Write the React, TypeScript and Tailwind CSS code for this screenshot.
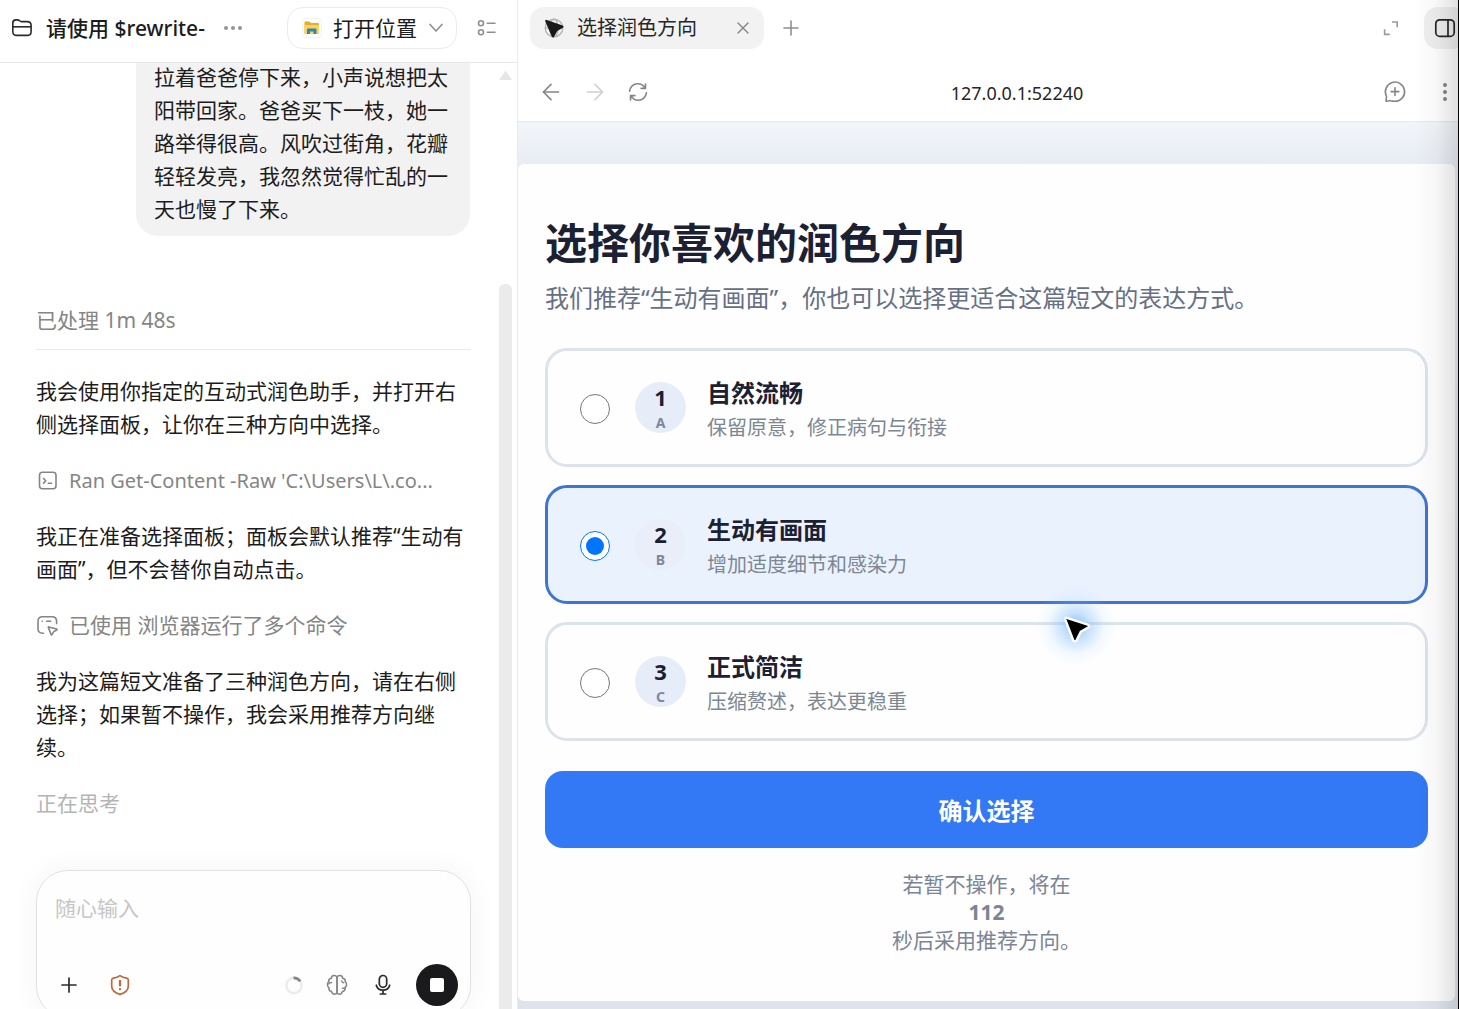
import { useState } from "react";
import { ArrowLeft, ArrowRight, Plus, X } from "lucide-react";

interface Direction {
  id: string;
  letter: string;
  title: string;
  desc: string;
}

const DIRECTIONS: Direction[] = [
  { id: "1", letter: "A", title: "自然流畅", desc: "保留原意，修正病句与衔接" },
  { id: "2", letter: "B", title: "生动有画面", desc: "增加适度细节和感染力" },
  { id: "3", letter: "C", title: "正式简洁", desc: "压缩赘述，表达更稳重" },
];

function FolderIcon() {
  return (
    <svg width="22" height="22" viewBox="0 0 22 22" fill="none" stroke="#2b2b2b" strokeWidth="1.6" strokeLinejoin="round">
      <path d="M1.8 6.2c0-2 1.1-3.3 3-3.3h1.7c.9 0 1.5.3 2.1.9.6.6 1 .8 1.9.8h5.7c2.4 0 3.9 1.4 3.9 3.7v6.1c0 2.5-1.4 4-4 4H5.7c-2.5 0-3.9-1.5-3.9-4Z" />
      <path d="M1.8 9.8h18.3" />
    </svg>
  );
}

function ExplorerIcon() {
  return (
    <svg width="20" height="20" viewBox="0 0 20 20">
      <rect x=".5" y=".5" width="19" height="19" rx="3" fill="#fff" stroke="#f1f1f1" />
      <path d="M2.5 4.5c0-.6.4-1 1-1h4l1.5 1.5h7c.6 0 1 .4 1 1v9.5h-14.500Z" fill="#e8ae1f" />
      <path d="M2.5 7h14.5v8.5H2.5Z" fill="#fad365" />
      <path d="M5 16v-4.500c0-.6.4-1 1-1h7.500c.6 0 1 .4 1 1V16h-3v-2.500h-3.500V16Z" fill="#2f88a8" />
    </svg>
  );
}

function ChecklistIcon() {
  return (
    <svg width="20" height="18" viewBox="0 0 20 18" fill="none" stroke="#8f8f8f" strokeWidth="1.6" strokeLinecap="round">
      <circle cx="4" cy="4.2" r="2.5" />
      <circle cx="4" cy="13.2" r="2.5" />
      <path d="M10.3 4.2h7.7M10.3 13.2h7.7" />
    </svg>
  );
}

function TerminalIcon() {
  return (
    <svg width="22" height="22" viewBox="0 0 22 22" fill="none" stroke="#858585" strokeWidth="1.6" strokeLinecap="round" strokeLinejoin="round">
      <rect x="3.5" y="2.3" width="16.5" height="16.5" rx="3" />
      <path d="M7.5 8.5l2.3 2.3-2.3 2.3M12.3 13.3h3.2" />
    </svg>
  );
}

function BrowserUseIcon() {
  return (
    <svg width="22" height="22" viewBox="0 0 22 22" fill="none" stroke="#858585" strokeWidth="1.6" strokeLinecap="round" strokeLinejoin="round">
      <path d="M7.5 18.2H6.5c-3 0-4.500-1.600-4.500-4.400V6.300c0-3 1.600-4.500 4.500-4.500h9.500c3 0 4.600 1.500 4.600 4.500v2.300" />
      <path d="M6.2 6.300h.1M10.700 6.300h4" />
      <path d="M12.8 11.900l7.800 2.200c.5.200.5.600.1.900l-2.900 1.600-1.800 3c-.3.500-.8.400-.9-.1l-2.800-7.100c-.1-.3.100-.6.500-.5Z" />
    </svg>
  );
}

function ShieldAlertIcon() {
  return (
    <svg width="22" height="22" viewBox="0 0 22 22" fill="none" stroke="#c0683c" strokeWidth="1.7" strokeLinecap="round" strokeLinejoin="round">
      <path d="M11 1.6c2 1.300 4.200 2.100 6.600 2.500 1 .2 1.700.8 1.700 1.900v6.200c0 4.300-2.600 6.300-8.300 8.200-5.700-1.900-8.300-3.900-8.300-8.200V6c0-1.100.7-1.700 1.700-1.900 2.400-.4 4.600-1.200 6.600-2.500Z" />
      <path d="M11 6.8v4.7" strokeWidth="2.2" />
      <path d="M11 15.1v.1" strokeWidth="2.3" />
    </svg>
  );
}

function SpinnerIcon() {
  return (
    <svg width="20" height="20" viewBox="0 0 20 20" fill="none" strokeWidth="2.6">
      <circle cx="10" cy="10.5" r="7.6" stroke="#ececec" />
      <path d="M9.500 2.900a7.600 7.600 0 0 1 6.700 3.500" stroke="#858585" />
    </svg>
  );
}

function BrainIcon() {
  return (
    <svg width="22" height="22" viewBox="0 0 22 22" fill="none" stroke="#858585" strokeWidth="1.5" strokeLinecap="round" strokeLinejoin="round">
      <path d="M11 3.500C10.400 2 9.300 1.500 8 1.600 6.400 1.700 5.400 2.900 5.400 4.300 3.600 4.600 2.500 5.900 2.700 7.700 1.600 8.600 1.200 9.900 1.500 11.400c.2 1.100.7 1.800 1.400 2.300-.2 2 .9 3.500 2.700 3.900.4 1.600 1.400 2.700 3 2.700 1.200 0 2-.6 2.400-1.600Z" />
      <path d="M11 3.500c.6-1.500 1.700-2 3-1.900 1.600.1 2.600 1.300 2.600 2.700 1.800.3 2.900 1.600 2.700 3.400 1.100.9 1.500 2.200 1.200 3.700-.2 1.100-.7 1.800-1.400 2.300.2 2-.9 3.500-2.700 3.900-.4 1.600-1.400 2.700-3 2.700-1.200 0-2-.6-2.400-1.600Z" />
      <path d="M2.900 9.800c.6-1 1.500-1.500 2.600-1.300M15.700 6.900c.3 1.100 1 1.700 2 1.800M19 13.500c-.6.700-1.500 1-2.500.8" />
    </svg>
  );
}

function MicIcon() {
  return (
    <svg width="20" height="22" viewBox="0 0 20 22" fill="none" stroke="#2b2b2b" strokeWidth="1.7" strokeLinecap="round">
      <rect x="6.300" y="1.500" width="7.400" height="11.800" rx="3.700" />
      <path d="M3.300 11.200c.8 3 3.400 5 6.700 5s5.900-2 6.700-5M10 16.200v3.700M7.300 20h5.400" />
    </svg>
  );
}

function GlobePointerIcon() {
  return (
    <svg width="22" height="22" viewBox="0 0 22 22">
      <g fill="none" stroke="#b4b4b4" strokeWidth="1.4">
        <circle cx="11" cy="11" r="8.8" />
        <ellipse cx="11" cy="11" rx="4" ry="8.8" />
        <path d="M2.200 11h17.600" />
      </g>
      <path d="M3.800 2.900l15.800 5.600c1.200.5 1.300 1.700.2 2.300l-5.600 3.300-3 5.500c-.7 1.200-2 1.100-2.400-.2L2.300 4.600c-.4-1.200.4-2 1.500-1.700Z" fill="#191919" />
    </svg>
  );
}

function ReloadIcon() {
  return (
    <svg width="20" height="20" viewBox="0 0 20 20" fill="none" stroke="#858585" strokeWidth="1.6" strokeLinecap="round" strokeLinejoin="round">
      <path d="M1.600 9.200C2 4.900 5.400 1.700 9.700 1.700c3.300 0 5.800 1.500 7.500 4.600M17.500 2v4.400h-4.400" />
      <path d="M18.400 10.800c-.4 4.300-3.800 7.500-8.100 7.500-3.300 0-5.800-1.500-7.500-4.600M2.500 18v-4.400h4.400" />
    </svg>
  );
}

function ExpandIcon() {
  return (
    <svg width="16" height="16" viewBox="0 0 16 16" fill="none" stroke="#9b9b9b" strokeWidth="1.6">
      <path d="M9 2h5.200v5.200M1.600 9.300v5.100h5.200" />
    </svg>
  );
}

function SidePanelIcon() {
  return (
    <svg width="22" height="22" viewBox="0 0 22 22" fill="none" stroke="#262626" strokeWidth="1.7">
      <rect x="1.8" y="2.8" width="18.4" height="16.6" rx="4" />
      <path d="M14 2.800v16.600" />
    </svg>
  );
}

function CommentPlusIcon() {
  return (
    <svg width="24" height="24" viewBox="0 0 24 24" fill="none" stroke="#858585" strokeWidth="1.6" strokeLinecap="round" strokeLinejoin="round">
      <path d="M12 21.300a9.600 9.600 0 1 0-8.700-5.500c.3.600.3 1 .2 1.600l-.5 3.300c-.1.400.2.600.5.500l3-.5c.5-.1.800-.1 1.200.1 1.300.4 2.800.5 4.300.5Z" />
      <path d="M12 7.700v7.800M8.100 11.600h7.800" />
    </svg>
  );
}

function ChatPane() {
  return (
    <section className="flex h-screen min-w-0 flex-col overflow-hidden border-r border-[#ebebeb] bg-white text-[21px] leading-[33px] text-[#1c1c1c]">
      <header className="flex h-[63px] shrink-0 items-center border-b border-[#e6e6e6] pb-[6px] pl-[11px]">
        <FolderIcon />
        <h1 className="ml-[13px] whitespace-nowrap font-medium">请使用 $rewrite-</h1>
        <button type="button" aria-label="更多" className="ml-[19px] flex h-8 items-center gap-[3px]">
          <i className="size-[4px] rounded-full bg-[#949494]" />
          <i className="size-[4px] rounded-full bg-[#949494]" />
          <i className="size-[4px] rounded-full bg-[#949494]" />
        </button>
        <button type="button" className="ml-auto flex h-[42px] items-center rounded-[16px] border border-[#ececec] pl-[14px] pr-[12px]">
          <ExplorerIcon />
          <span className="ml-[11px] whitespace-nowrap">打开位置</span>
          <svg className="ml-[11px]" width="16" height="10" viewBox="0 0 16 10" fill="none" stroke="#949494" strokeWidth="1.8" strokeLinecap="round" strokeLinejoin="round">
            <path d="M2 1.500l6 6.500 6-6.500" />
          </svg>
        </button>
        <button type="button" aria-label="任务列表" className="mx-5">
          <ChecklistIcon />
        </button>
      </header>

      <div className="flex min-h-0 flex-1">
        <div className="flex min-w-0 flex-1 flex-col pl-[36px] pr-[28px]">
          <div className="flex min-h-0 flex-1 flex-col justify-end gap-[23px] overflow-hidden pb-[50px]">
            <p className="mb-[45px] ml-[100px] mr-px shrink-0 rounded-b-[22px] bg-[#f2f2f2] pb-[10px] pl-[18px] pr-[17px]">
              拉着爸爸停下来，小声说想把太阳带回家。爸爸买下一枝，她一路举得很高。风吹过街角，花瓣轻轻发亮，我忽然觉得忙乱的一天也慢了下来。
            </p>
            <div className="mb-[2px] shrink-0 border-b border-[#e8e8e8] pb-[12px] text-[#858585]">
              已处理 1m 48s
            </div>
            <p className="shrink-0">我会使用你指定的互动式润色助手，并打开右侧选择面板，让你在三种方向中选择。</p>
            <div className="flex shrink-0 items-center gap-[11px] text-[#858585]">
              <TerminalIcon />
              <span className="truncate text-[20px]">Ran Get-Content -Raw 'C:\Users\L\.co...</span>
            </div>
            <p className="shrink-0">我正在准备选择面板；面板会默认推荐“生动有画面”，但不会替你自动点击。</p>
            <div className="flex shrink-0 items-center gap-[11px] text-[#858585]">
              <BrowserUseIcon />
              <span>已使用 浏览器运行了多个命令</span>
            </div>
            <p className="shrink-0">我为这篇短文准备了三种润色方向，请在右侧选择；如果暂不操作，我会采用推荐方向继续。</p>
            <p className="shrink-0 text-[#b4b4b4]">正在思考</p>
          </div>

          <form className="-mb-[9px] flex h-[148px] shrink-0 flex-col justify-between rounded-[32px] border border-[#e2e2e2] bg-[#fefefe] pb-[11px] pl-[11px] pr-[12px] pt-[21px] shadow-[0_0_30px_rgba(0,0,0,0.05)]">
            <textarea
              aria-label="输入消息"
              placeholder="随心输入"
              rows={1}
              className="mx-[7px] h-[33px] resize-none bg-transparent outline-none placeholder:text-[#c6c6c6]"
            />
            <div className="flex items-center">
              <button type="button" aria-label="添加" className="ml-[9px]">
                <Plus size={24} strokeWidth={1.7} color="#2b2b2b" />
              </button>
              <button type="button" aria-label="权限" className="ml-[28px]">
                <ShieldAlertIcon />
              </button>
              <span className="ml-auto">
                <SpinnerIcon />
              </span>
              <button type="button" aria-label="思考强度" className="ml-[22px]">
                <BrainIcon />
              </button>
              <button type="button" aria-label="语音" className="ml-[25px]">
                <MicIcon />
              </button>
              <button type="button" aria-label="停止" className="ml-[23px] flex size-[42px] items-center justify-center rounded-full bg-[#1a1a1d]">
                <i className="size-[14px] rounded-[2px] bg-white" />
              </button>
            </div>
          </form>
        </div>

        <div aria-hidden="true" className="mr-[5px] flex w-[13px] flex-col items-center pt-[7px]">
          <svg width="13" height="11" viewBox="0 0 13 11">
            <path d="M6.500.500L13 10H0Z" fill="#e6e6e6" />
          </svg>
          <div className="mt-[203px] w-full flex-1 rounded-t-[6px] bg-[#ebebeb]" />
        </div>
      </div>
    </section>
  );
}

function BrowserBars() {
  return (
    <div className="shrink-0 border-b border-[#e8e8e8] bg-white">
      <div className="flex h-[56px] items-center">
        <div className="ml-[12px] flex h-[42px] w-[234px] items-center rounded-[14px] bg-[#f2f2f2] pl-[13px] pr-[11px]">
          <GlobePointerIcon />
          <span className="ml-[12px] text-[20px] text-[#262626]">选择润色方向</span>
          <button type="button" aria-label="关闭标签页" className="ml-auto">
            <X size={20} strokeWidth={1.6} color="#858585" />
          </button>
        </div>
        <button type="button" aria-label="新标签页" className="ml-[15px]">
          <Plus size={24} strokeWidth={1.6} color="#8f8f8f" />
        </button>
        <button type="button" aria-label="全屏" className="ml-auto">
          <ExpandIcon />
        </button>
        <button type="button" aria-label="侧边栏" className="-mr-2 ml-[25px] flex size-[42px] items-center justify-center rounded-[14px] bg-[#efefef]">
          <SidePanelIcon />
        </button>
      </div>
      <div className="flex h-[65px] items-center pt-[6px]">
        <button type="button" aria-label="后退" className="ml-[20px]">
          <ArrowLeft size={26} strokeWidth={1.5} color="#858585" />
        </button>
        <button type="button" aria-label="前进" className="ml-[18px]">
          <ArrowRight size={26} strokeWidth={1.5} color="#d0d0d0" />
        </button>
        <button type="button" aria-label="刷新" className="ml-[20px]">
          <ReloadIcon />
        </button>
        <input
          aria-label="地址"
          defaultValue="127.0.0.1:52240"
          className="ml-[18px] min-w-0 flex-1 bg-transparent pt-[2px] text-center text-[18px] leading-6 text-[#262626] outline-none"
        />
        <button type="button" aria-label="添加批注" className="ml-[15px]">
          <CommentPlusIcon />
        </button>
        <button type="button" aria-label="菜单" className="ml-[36px] mr-[11px] flex flex-col gap-[3px]">
          <i className="size-[4px] rounded-full bg-[#858585]" />
          <i className="size-[4px] rounded-full bg-[#858585]" />
          <i className="size-[4px] rounded-full bg-[#858585]" />
        </button>
      </div>
    </div>
  );
}

function DirectionForm() {
  const [selected, setSelected] = useState("2");

  return (
    <form className="flex flex-1 flex-col rounded-[6px] bg-[#fefefe] px-[27px] pt-[50px]">
      <h2 className="text-[42px] font-bold leading-[58px] text-[#1b2132]">选择你喜欢的润色方向</h2>
      <p className="mt-[8px] text-[24px] leading-[36px] text-[#667085]">
        我们推荐“生动有画面”，你也可以选择更适合这篇短文的表达方式。
      </p>

      <div className="mt-[32px] flex flex-col gap-[18px]">
        {DIRECTIONS.map((d) => (
          <label
            key={d.id}
            className={
              selected === d.id
                ? "flex h-[119px] items-center rounded-[22px] border-3 border-[#3f74d1] bg-[#eaf2fe] pl-[32px] pt-[3px]"
                : "flex h-[119px] items-center rounded-[22px] border-3 border-[#dde3eb] bg-[#fefefe] pl-[32px] pt-[3px]"
            }
          >
            <input
              type="radio"
              name="direction"
              value={d.id}
              checked={selected === d.id}
              onChange={() => setSelected(d.id)}
              className="size-[30px] shrink-0 accent-[#0075ff]"
            />
            <span
              className={
                selected === d.id
                  ? "mb-[3px] ml-[25px] flex size-[51px] shrink-0 flex-col items-center rounded-full bg-[#e9eef9] pt-px font-bold"
                  : "mb-[3px] ml-[25px] flex size-[51px] shrink-0 flex-col items-center rounded-full bg-[#e7edf8] pt-px font-bold"
              }
            >
              <span className="text-[22px] leading-[28px] text-[#1b2132]">{d.id}</span>
              <span className="text-[14px] leading-6 text-[#7d8799]">{d.letter}</span>
            </span>
            <span className="ml-[21px] flex flex-col pt-[2px]">
              <span className="text-[24px] font-bold leading-[36px] text-[#1b2132]">{d.title}</span>
              <span className="text-[20px] leading-[34px] text-[#7d8794]">{d.desc}</span>
            </span>
          </label>
        ))}
      </div>

      <button type="button" className="mt-[30px] h-[77px] rounded-[18px] bg-[#3378f4] pt-[2px] text-[24px] font-bold text-white">
        确认选择
      </button>

      <div className="mt-[22px] flex flex-col items-center text-[21px] leading-[28px] text-[#7b8597]">
        <span>若暂不操作，将在</span>
        <strong>112</strong>
        <span>秒后采用推荐方向。</span>
      </div>
    </form>
  );
}

export default function App() {
  return (
    <main className="grid h-screen grid-cols-[518px_1fr] overflow-hidden font-['Noto_Sans','Noto_Sans_CJK_SC',sans-serif]">
      <ChatPane />
      <section className="relative flex h-screen min-w-0 flex-col overflow-hidden border-r border-black">
        <BrowserBars />
        <div className="flex min-h-0 flex-1 flex-col bg-linear-to-b from-[#f2f5f9] via-[#e8ecf3] via-5% to-[#dfe4ec] pb-2 pr-[3px] pt-[42px]">
          <DirectionForm />
        </div>

        {/* window edge shade */}
        <div className="pointer-events-none absolute inset-y-0 right-0 w-[44px] bg-linear-to-r from-transparent via-black/3 to-black/12" />

        {/* agent pointer */}
        <div className="pointer-events-none absolute left-[540px] top-[610px]">
          <div className="absolute -left-[24px] -top-[26px] size-[84px] rounded-full bg-[radial-gradient(circle,rgba(80,165,250,0.65)_0%,rgba(110,180,250,0.35)_25%,rgba(150,205,255,0.1)_48%,transparent_68%)]" />
          <svg className="relative" width="40" height="40" viewBox="0 0 40 40">
            <path
              d="M8.800 7.800l21 6.900c1.500.5 1.700 2.200.3 2.900l-7.300 4.100-4.200 8.500c-.8 1.600-2.900 1.500-3.500-.2L7.300 9.600c-.4-1.200.3-2.200 1.500-1.800Z"
              fill="#000"
              stroke="#fff"
              strokeWidth="2.4"
              strokeLinejoin="round"
            />
          </svg>
        </div>
      </section>
    </main>
  );
}
